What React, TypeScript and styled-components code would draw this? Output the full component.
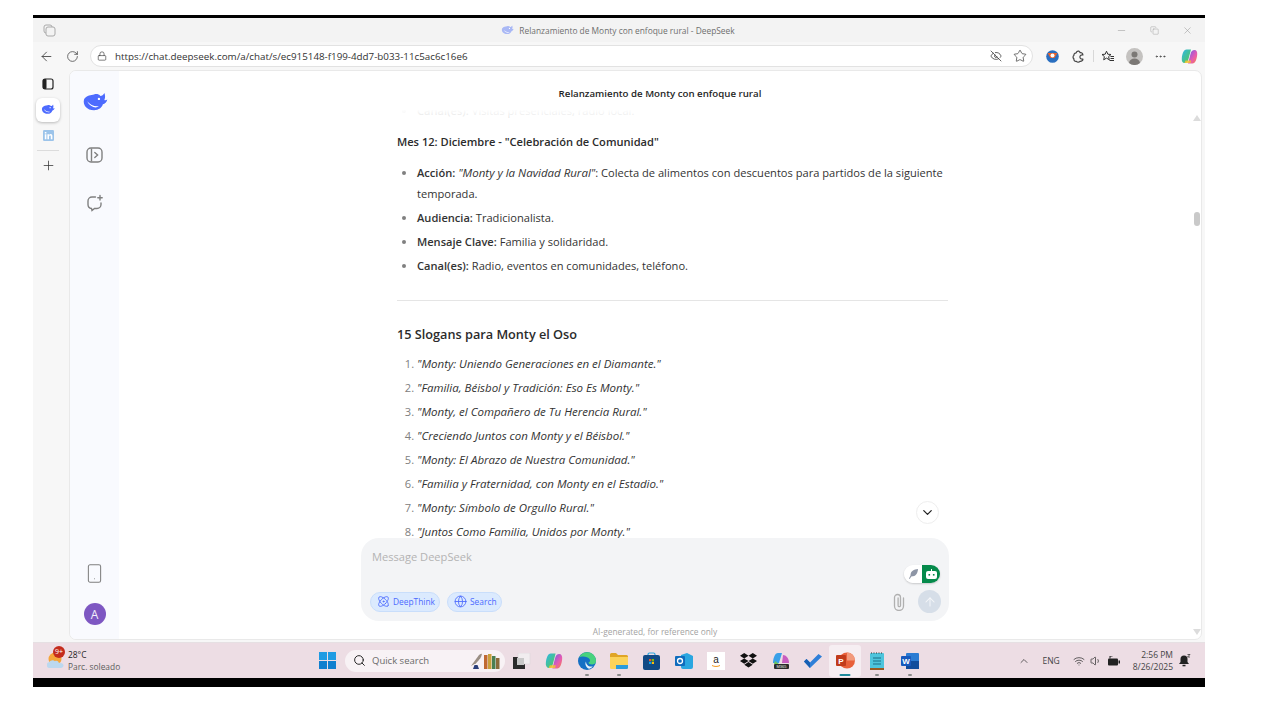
import styled, { createGlobalStyle } from 'styled-components';
import {
  ArrowLeft,
  ArrowUp,
  Atom,
  ChevronDown,
  ChevronUp,
  Copy,
  EyeOff,
  Globe,
  Lock,
  Minus,
  MoreHorizontal,
  Plus,
  RotateCw,
  Search,
  Smartphone,
  Star,
  Volume1,
  Wifi,
  X,
} from 'lucide-react';

const GlobalStyle = createGlobalStyle`
  html, body {
    margin: 0;
    padding: 0;
    background: #ffffff;
    font-family: "Open Sans", "Noto Sans", sans-serif;
  }
`;

const Page = styled.div`
  width: 1280px;
  height: 720px;
  padding: 15px 0 0 33px;
  box-sizing: border-box;
  overflow: hidden;
`;

const Window = styled.div`
  width: 1172px;
  height: 672px;
  display: flex;
  flex-direction: column;
  background: #f7f7f7;
  border-top: 3px solid #000;
  border-bottom: 9px solid #000;
  box-sizing: border-box;
`;

const TabBar = styled.div`
  height: 24px;
  flex: none;
  display: grid;
  grid-template-columns: 1fr auto 1fr;
  align-items: center;
  background: #f3f3f3;
  padding: 0 12px 0 10px;
  color: #8a8a8a;
`;

const TabTitle = styled.div`
  display: flex;
  align-items: center;
  gap: 5px;
  font-size: 8.4px;
  color: #6f6f6f;
`;

const WindowButtons = styled.div`
  display: flex;
  justify-content: flex-end;
  gap: 22px;
  color: #9a9a9a;
`;

const WindowButton = styled.div`
  width: 11px;
  display: flex;
  align-items: center;
  justify-content: center;
`;

const Toolbar = styled.div`
  height: 28px;
  flex: none;
  display: flex;
  align-items: center;
  padding-right: 3px;
  color: #444;
`;

const NavButton = styled.div`
  width: 26px;
  display: flex;
  justify-content: center;
`;

const AddressBar = styled.div`
  width: 943px;
  height: 22px;
  margin-left: 5px;
  display: flex;
  align-items: center;
  gap: 8px;
  padding: 0 5px 0 6px;
  box-sizing: border-box;
  background: #ffffff;
  border: 1px solid #e2e2e2;
  border-radius: 12px;
  font-size: 9.8px;
  color: #333;
`;

const Url = styled.span`
  flex: 1;
`;

const AddressActions = styled.div`
  display: flex;
  align-items: center;
  gap: 11px;
`;

const Extensions = styled.div`
  flex: 1;
  display: flex;
  align-items: center;
  justify-content: flex-end;
`;

const ToolSlot = styled.div<{ $spaced?: boolean }>`
  width: 26px;
  margin-left: ${({ $spaced }) => ($spaced ? '3px' : '0')};
  display: flex;
  align-items: center;
  justify-content: center;
`;

const ToolbarDivider = styled.div`
  width: 1px;
  height: 12px;
  background: #d8d8d8;
  margin: 0 1.5px;
`;

const Profile = styled.div`
  width: 17px;
  height: 17px;
  border-radius: 50%;
  background: #c4c2c0;
  display: flex;
  align-items: center;
  justify-content: center;
`;

const Body = styled.div`
  flex: 1;
  min-height: 0;
  display: flex;
  padding-right: 3px;
`;

const Rail = styled.div`
  width: 36px;
  flex: none;
  display: flex;
  flex-direction: column;
  align-items: center;
  padding-top: 2px;
  color: #333;
`;

const RailButton = styled.div<{ $active?: boolean }>`
  width: 24px;
  height: 24px;
  margin-left: -6px;
  margin-bottom: 1.5px;
  flex: none;
  display: flex;
  align-items: center;
  justify-content: center;
  border-radius: 6px;
  background: ${({ $active }) => ($active ? '#ffffff' : 'transparent')};
  box-shadow: ${({ $active }) => ($active ? '0 1px 3px rgba(0,0,0,.25)' : 'none')};
`;

const RailDivider = styled.div`
  width: 22px;
  height: 1px;
  flex: none;
  margin: 1.5px 0 2px -6px;
  background: #dcdcdc;
`;

const Panel = styled.div`
  flex: 1;
  min-width: 0;
  display: flex;
  background: #ffffff;
  border: 1px solid #e9e9e9;
  border-radius: 7px;
  overflow: hidden;
`;

const SideBar = styled.div`
  width: 49px;
  flex: none;
  display: flex;
  flex-direction: column;
  align-items: center;
  padding: 21px 0 14px;
  box-sizing: border-box;
  background: #f9fafe;
  color: #7f7f7f;
`;

const LogoSlot = styled.div`
  display: flex;
  margin-bottom: 6px;
`;

const SideIcon = styled.div`
  margin-top: 28px;
  height: 20px;
  display: flex;
  align-items: center;
`;

const SideSpacer = styled.div`
  flex: 1;
`;

const Avatar = styled.div`
  width: 22px;
  height: 22px;
  margin-top: 19px;
  border-radius: 50%;
  background: #7e57c2;
  color: #f4f0fb;
  font-size: 12px;
  display: flex;
  align-items: center;
  justify-content: center;
`;

const Main = styled.div`
  position: relative;
  flex: 1;
  min-width: 0;
  display: flex;
  flex-direction: column;
  align-items: center;
  padding-right: 10px;
`;

const ChatTitle = styled.div`
  height: 33px;
  flex: none;
  margin-left: 10px;
  display: flex;
  align-items: center;
  padding-top: 11px;
  box-sizing: border-box;
  font-size: 9.7px;
  font-weight: 600;
  color: #1f1f1f;
`;

const Conversation = styled.div`
  position: relative;
  flex: 1;
  min-height: 0;
  width: 551px;
  margin-left: 35px;
  overflow: hidden;
  color: #333;
  font-size: 11.1px;
  strong {
    font-weight: 600;
  }
  em {
    font-size: 11.5px;
  }
`;

const TopFade = styled.div`
  position: absolute;
  inset: 0 0 auto 0;
  height: 22px;
  background: linear-gradient(#fff 25%, rgba(255, 255, 255, 0.72));
`;

const FadedList = styled.ul`
  margin: -4px 0 0;
  padding: 0 0 0 20px;
  line-height: 21px;
`;

const SectionHeading = styled.div`
  margin: 11px 0 10px;
  font-size: 11.1px;
  font-weight: 600;
  line-height: 20px;
  color: #2b2b2b;
`;

const SlogansHeading = styled.div`
  margin-bottom: 9px;
  font-size: 12.7px;
  font-weight: 600;
  line-height: 20px;
  color: #2b2b2b;
`;

const BulletList = styled.ul`
  margin: 0;
  padding: 0 0 0 20px;
  line-height: 21px;
`;

const NumberList = styled.ol`
  margin: 0;
  padding: 0 0 0 20px;
  line-height: 21px;
`;

const Item = styled.li`
  margin-bottom: 3px;
  &::marker {
    color: #808080;
  }
`;

const Rule = styled.hr`
  margin: 24px 0 23px;
  border: 0;
  border-top: 1px solid #e5e5e5;
`;

const Composer = styled.div`
  position: relative;
  width: 588px;
  height: 83px;
  flex: none;
  box-sizing: border-box;
  padding: 11px 8px 8px 9px;
  display: flex;
  flex-direction: column;
  justify-content: space-between;
  border-radius: 18px;
  background: #f3f4f6;
`;

const Placeholder = styled.div`
  padding-left: 2px;
  font-size: 11.1px;
  color: #b3b3b3;
`;

const ComposerRow = styled.div`
  display: flex;
  align-items: center;
  gap: 7px;
`;

const Pill = styled.div`
  height: 20px;
  display: flex;
  align-items: center;
  gap: 3px;
  padding: 0 4px 0 6px;
  border: 1px solid #c9defb;
  border-radius: 10px;
  box-sizing: border-box;
  background: #dbeafe;
  font-size: 8.4px;
  color: #4d6bfe;
`;

const SendArea = styled.div`
  margin-left: auto;
  display: flex;
  align-items: center;
  gap: 13px;
`;

const SendButton = styled.div`
  width: 23px;
  height: 23px;
  border-radius: 50%;
  background: #d6dee8;
  color: #f4f6f9;
  display: flex;
  align-items: center;
  justify-content: center;
`;

const ModeSwitch = styled.div`
  position: absolute;
  top: 27px;
  right: 9px;
  display: flex;
  width: 36px;
  height: 18px;
  border-radius: 9px;
  overflow: hidden;
  box-shadow: 0 1px 2px rgba(0, 0, 0, 0.18);
`;

const ModeSide = styled.div<{ $green?: boolean }>`
  flex: 1;
  display: flex;
  align-items: center;
  justify-content: center;
  background: ${({ $green }) => ($green ? '#058a4b' : '#ffffff')};
`;

const Disclaimer = styled.div`
  height: 18px;
  flex: none;
  display: flex;
  align-items: center;
  padding-top: 2px;
  box-sizing: border-box;
  font-size: 8.4px;
  color: #a3a3a3;
`;

const JumpButton = styled.div`
  position: absolute;
  right: 262px;
  top: 430px;
  width: 23px;
  height: 23px;
  border-radius: 50%;
  background: #fff;
  border: 1px solid #eee;
  box-sizing: border-box;
  color: #222;
  display: flex;
  align-items: center;
  justify-content: center;
`;

const ScrollTrack = styled.div`
  position: absolute;
  top: 44px;
  right: 0;
  bottom: 4px;
  width: 9px;
`;

const ScrollArrow = styled.div<{ $down?: boolean }>`
  position: absolute;
  left: 1px;
  ${({ $down }) => ($down ? 'bottom: 0;' : 'top: 0;')}
  border-left: 4px solid transparent;
  border-right: 4px solid transparent;
  ${({ $down }) =>
    $down ? 'border-top: 6px solid #dcdcdc;' : 'border-bottom: 6px solid #dcdcdc;'}
`;

const ScrollThumb = styled.div`
  position: absolute;
  top: 97px;
  left: 2px;
  width: 6px;
  height: 14px;
  border-radius: 3px;
  background: #c9c9c9;
`;

const Taskbar = styled.div`
  height: 36px;
  flex: none;
  display: grid;
  grid-template-columns: 286px auto 1fr;
  align-items: center;
  margin-top: 2px;
  background: #eddde4;
  border-top: 1px solid #e6e0e3;
  box-sizing: border-box;
`;

const Weather = styled.div`
  display: flex;
  align-items: center;
  gap: 3px;
  padding-left: 14px;
`;

const WeatherIcon = styled.div`
  position: relative;
  width: 18px;
  height: 20px;
`;

const Badge = styled.div`
  position: absolute;
  top: -5px;
  left: 6px;
  width: 12px;
  height: 12px;
  border-radius: 50%;
  background: #c42b1c;
  color: #fff;
  font-size: 7px;
  display: flex;
  align-items: center;
  justify-content: center;
`;

const WeatherText = styled.div`
  font-size: 8.4px;
  line-height: 12px;
  color: #5d5d5d;
  strong {
    display: block;
    font-weight: 400;
    color: #222;
  }
`;

const Dock = styled.div`
  display: flex;
  align-items: center;
`;

const SearchBox = styled.div`
  width: 160px;
  height: 22px;
  margin: 0 1px 0 9px;
  display: flex;
  align-items: center;
  gap: 6px;
  padding: 0 5px 0 8px;
  box-sizing: border-box;
  border-radius: 11px;
  background: #f8f2f5;
  font-size: 9.5px;
  color: #6a6a6a;
`;

const SearchArt = styled.div`
  margin-left: auto;
  display: flex;
`;

const DockItem = styled.div<{ $active?: boolean; $dot?: boolean }>`
  position: relative;
  width: 32.3px;
  height: 32px;
  display: flex;
  align-items: center;
  justify-content: center;
  border-radius: 3px;
  background: ${({ $active }) => ($active ? 'rgba(255,255,255,.5)' : 'transparent')};
  &::after {
    content: '';
    display: ${({ $dot, $active }) => ($dot || $active ? 'block' : 'none')};
    position: absolute;
    bottom: 1px;
    left: 50%;
    transform: translateX(-50%);
    width: ${({ $active }) => ($active ? '11px' : '4px')};
    height: 2px;
    border-radius: 1px;
    background: ${({ $active }) => ($active ? '#1f8a9c' : '#8b8b8b')};
  }
`;

const Tray = styled.div`
  display: flex;
  align-items: center;
  justify-content: flex-end;
  padding-right: 14px;
  color: #333;
  font-size: 8.5px;
`;

const TrayLabel = styled.span`
  margin: 0 13px 0 12px;
  color: #444;
`;

const TrayIcons = styled.div`
  display: flex;
  align-items: center;
  gap: 5px;
`;

const Clock = styled.div`
  margin: 0 6px 0 13px;
  text-align: right;
  line-height: 12px;
  color: #444;
`;

const Whale = ({ size, color = '#4d6bfe' }: { size: number; color?: string }) => (
  <svg width={size} height={size * 0.72} viewBox="0 0 26 19">
    <path
      fill={color}
      d="M2 7C0 13 5 18.500 12 18.500c5 0 8-2.800 9-6 2-.5 4-2.500 4.500-5-1 .7-2 1-3 .5 1-2 1-4.500 0-7-1 2-2.500 3-4 3-1.500-2-4.500-2.500-6.500-1.500C9 3.500 5 3 2 7z"
    />
    <path fill="#fff" d="M5 9.500c3 3.500 7 5.500 12 5-3 2.500-9 1-12-5z" />
    <circle cx="17" cy="7" r="1.200" fill="#fff" />
  </svg>
);

const PanelIcon = () => (
  <svg width="12" height="12" viewBox="0 0 12 12">
    <rect x="1" y="1" width="10" height="10" rx="2" fill="none" stroke="#222" strokeWidth="1.2" />
    <rect x="1" y="1" width="3.5" height="10" rx="1" fill="#222" />
  </svg>
);

const LinkedInIcon = () => (
  <svg width="11" height="11" viewBox="0 0 11 11">
    <rect width="11" height="11" rx="1.2" fill="#9cc4ea" />
    <path fill="#fff" d="M1.800 4.200h1.600v5H1.800zM1.800 2h1.600v1.400H1.800zM4.400 4.200H6v.7c.4-.6 1-.8 1.600-.8 1.200 0 1.800.8 1.800 2.100v3H7.800V6.600c0-.7-.2-1.100-.8-1.100s-1 .4-1 1.200v2.500H4.400z" />
  </svg>
);

const NewChatIcon = () => (
  <svg width="18" height="18" viewBox="0 0 18 18" fill="none" stroke="#808080" strokeWidth="1.4" strokeLinecap="round">
    <path d="M9.500 3H6a4 4 0 0 0-4 4v3.500a4 4 0 0 0 3.500 4l.5 2 2.500-2H11a4 4 0 0 0 4-4V9" />
    <path d="M14 1.500v4.500M11.800 3.700h4.400" />
  </svg>
);

const SidePanelIcon = () => (
  <svg width="17" height="16" viewBox="0 0 17 16" fill="none" stroke="#808080" strokeWidth="1.4">
    <rect x="1" y="1" width="15" height="14" rx="4" />
    <path d="M5.500 1.500v13" />
    <path d="M8.800 5.500l2.800 2.500-2.800 2.500" strokeLinecap="round" />
  </svg>
);

const TabsIcon = () => (
  <svg width="13" height="13" viewBox="0 0 13 13" fill="none" stroke="#aaa" strokeWidth="1">
    <rect x="1" y="1" width="8" height="8" rx="2" />
    <rect x="3" y="3" width="9" height="9" rx="2" fill="#f3f3f3" />
  </svg>
);

const RingExtension = () => (
  <svg width="13" height="13" viewBox="0 0 13 13">
    <circle cx="6.500" cy="6.500" r="6.300" fill="#2a6fc0" />
    <path fill="#e8622c" d="M1.500 3h10L8.500 8h-4z" />
    <circle cx="6.500" cy="5.500" r="2" fill="#fff" />
  </svg>
);

const PuzzleIcon = () => (
  <svg width="13" height="13" viewBox="0 0 13 13" fill="none" stroke="#444" strokeWidth="1.200" strokeLinejoin="round">
    <path d="M7 1.200C5.500.8 4.500 1.700 4.200 2.800 2.800 2.800 1.700 4 2 5.300.8 6 .7 8 1.900 8.800c-.3 1.600 1 2.900 2.500 2.500.8 1 2.700 1.100 3.500 0 1.600.3 3.100-.8 3-2.300-1.500.5-3-.5-3-2s1.500-2.500 3-2c0-1.500-1.200-2.600-2.800-2.400C7.700 2 7.500 1.500 7 1.200z" />
  </svg>
);

const FavoritesIcon = () => (
  <svg width="14" height="13" viewBox="0 0 14 13" fill="none" stroke="#333" strokeWidth="1">
    <path d="M5.500 1.200l1.300 3 3.200.3-2.400 2.100.7 3.200-2.800-1.700-2.800 1.700.7-3.200L1 4.500l3.200-.3z" />
    <path d="M9.500 6.500H13M9.500 8.500H13M8.500 10.500H13" />
  </svg>
);

const PersonIcon = () => (
  <svg width="17" height="17" viewBox="0 0 17 17">
    <circle cx="8.500" cy="6.500" r="3" fill="#7b7875" />
    <path fill="#7b7875" d="M3 15c.4-3 2.600-4.500 5.500-4.500S13.600 12 14 15a8.500 8.500 0 0 1-11 0z" />
  </svg>
);

const CopilotIcon = ({ size = 17 }: { size?: number }) => (
  <svg width={size} height={size} viewBox="0 0 17 17">
    <defs>
      <linearGradient id="cpa" x1="0" y1="0" x2="1" y2="1">
        <stop offset="0" stopColor="#2fb7e8" />
        <stop offset="1" stopColor="#57c84d" />
      </linearGradient>
      <linearGradient id="cpb" x1="0" y1="0" x2="1" y2="1">
        <stop offset="0" stopColor="#6d5bf0" />
        <stop offset=".6" stopColor="#e85bb0" />
        <stop offset="1" stopColor="#f6873c" />
      </linearGradient>
    </defs>
    <path fill="url(#cpa)" d="M5.500 1.500H10L7.500 11c-.5 2.500-2 4-4 4C1.500 15 .5 13 .8 10.500 1.200 6 2.500 1.500 5.500 1.500z" />
    <path fill="url(#cpb)" d="M11.500 15.500H7l2.500-9.500c.5-2.500 2-4 4-4 2 0 3 2 2.700 4.500-.4 4.500-1.700 9-4.700 9z" />
    <path fill="#f4c430" d="M3.500 15h6l.8-2.500H4.500z" opacity=".85" />
  </svg>
);

const WindowsLogo = () => (
  <svg width="17" height="17" viewBox="0 0 17 17">
    <path fill="#1f9be3" d="M0 0h8v8H0zM9 0h8v8H9z" />
    <path fill="#0f7fcf" d="M0 9h8v8H0zM9 9h8v8H9z" />
  </svg>
);

const SunCloud = () => (
  <svg width="17" height="18" viewBox="0 0 17 18">
    <circle cx="8" cy="8" r="6.500" fill="#f6a53a" />
    <path fill="#bcd8ef" d="M3 17a3 3 0 0 1-.5-6c.8-2 4-2.600 5.500-.8 1.500-1 3.600 0 3.700 1.500 2.800-.3 5 1 4.800 2.900-.1 1.500-1.200 2.400-2.500 2.400z" />
  </svg>
);

const BooksArt = () => (
  <svg width="30" height="16" viewBox="0 0 30 16">
    <path fill="#9a8f84" d="M1 13L9 2c1-.8 2-1.200 3-1.200-.5 3-2 5.500-6 9.500z" />
    <path fill="#2b3f7a" d="M3 16l1.500-4h3l1.500 4z" />
    <path fill="#c06a33" d="M14 2h3.500v14H14z" />
    <path fill="#c9a13c" d="M18 1h3.500v15H18z" />
    <path fill="#4b7f52" d="M22 3h3.500v13H22z" />
    <path fill="#8a6b3a" d="M26 5h3.500v11H26z" />
  </svg>
);

const TaskViewIcon = () => (
  <svg width="18" height="16" viewBox="0 0 18 16">
    <rect x="0" y="4" width="12" height="12" fill="#2b2b2b" />
    <rect x="5" y="0" width="12" height="11" fill="#f1edef" stroke="#dcd8da" strokeWidth=".6" />
    <rect x="4" y="5" width="7" height="7" fill="#c8c8c8" />
  </svg>
);

const EdgeIcon = () => (
  <svg width="18" height="18" viewBox="0 0 18 18">
    <circle cx="9" cy="9" r="9" fill="#1570c4" />
    <path fill="#49d27d" d="M1 5.500C3 1 7.500-.5 11.500.5c3.500 1 6.500 4 6.500 8.500 0 2-1.500 3.500-4 3.500-2 0-3.500-1-3.500-2 1.500-.5 2-2 1-3.500C10 4.500 4 3.500 1 5.500z" />
    <path fill="#fff" opacity=".9" d="M8 9.500c0 3 2.500 5.500 6 5 .5-.1 1 .1.500.5-1 .8-2 1.500-3.500 1.800C8 15.500 6.500 12 8 9.500z" />
  </svg>
);

const FolderIcon = () => (
  <svg width="18" height="16" viewBox="0 0 18 16">
    <path fill="#e0a526" d="M0 1.500A1.500 1.500 0 0 1 1.500 0H6l2 2h8.500A1.500 1.500 0 0 1 18 3.500V6H0z" />
    <path fill="#fbd35a" d="M0 4h18v10.500a1.500 1.500 0 0 1-1.500 1.500h-15A1.500 1.500 0 0 1 0 14.500z" />
    <path fill="#2a9bdc" d="M6 12h12v2.500a1.500 1.500 0 0 1-1.500 1.500H6z" />
  </svg>
);

const StoreIcon = () => (
  <svg width="17" height="18" viewBox="0 0 17 18">
    <path fill="none" stroke="#2aa6e0" strokeWidth="1.200" d="M5 4V2.500A1.500 1.500 0 0 1 6.500 1h4A1.500 1.500 0 0 1 12 2.500V4" />
    <rect y="3" width="17" height="15" rx="2" fill="#114a85" />
    <path fill="#f35325" d="M6 7h2.200v2.200H6z" />
    <path fill="#81bc06" d="M8.800 7H11v2.200H8.800z" />
    <path fill="#05a6f0" d="M6 9.800h2.200V12H6z" />
    <path fill="#ffba08" d="M8.800 9.800H11V12H8.800z" />
  </svg>
);

const OutlookIcon = () => (
  <svg width="18" height="16" viewBox="0 0 18 16">
    <path fill="#2aa6e0" d="M6 2l6-2 6 3v11a2 2 0 0 1-2 2H8a2 2 0 0 1-2-2z" />
    <rect y="3" width="10" height="10" rx="1" fill="#0f6cbd" />
    <circle cx="5" cy="8" r="2.500" fill="none" stroke="#fff" strokeWidth="1.300" />
  </svg>
);

const AmazonIcon = () => (
  <svg width="18" height="18" viewBox="0 0 18 18">
    <rect width="18" height="18" fill="#fff" />
    <text x="9" y="11" textAnchor="middle" fontSize="10" fontFamily="Liberation Sans" fill="#222">a</text>
    <path d="M5 13.500c2.500 1.300 5.500 1.300 8 0" stroke="#f39a1f" strokeWidth="1" fill="none" />
  </svg>
);

const DropboxIcon = () => (
  <svg width="17" height="15" viewBox="0 0 17 15">
    <path fill="#111" d="M4.200 0l4.300 2.700L4.200 5.400 0 2.700zM12.800 0l4.200 2.700-4.200 2.700-4.300-2.700zM4.200 5.400l4.300 2.700-4.300 2.700L0 8.100zM12.800 5.400L17 8.100l-4.200 2.700-4.300-2.700zM4.300 11.700l4.200-2.700 4.200 2.700-4.200 2.800z" />
  </svg>
);

const M365Icon = () => (
  <svg width="18" height="18" viewBox="0 0 18 18">
    <path fill="#3aa0e8" d="M6 1h4L7 11H1C1 6 3 1 6 1z" />
    <path fill="#c85cc0" d="M11 3c3 0 6 3 6 8h-7z" />
    <path fill="#6bc65a" d="M3 9l4 3H2z" />
    <rect x="2" y="12" width="15" height="5" rx="1" fill="#2b2b2b" />
    <text x="9.500" y="16" textAnchor="middle" fontSize="4" fontFamily="Liberation Sans" fill="#eee">M365</text>
  </svg>
);

const TodoIcon = () => (
  <svg width="18" height="14" viewBox="0 0 18 14">
    <path fill="#2f7fd8" d="M0 7.500L2.500 5 6 8.500 14.500 0 18 2.500 6 14z" />
    <path fill="#175fb3" d="M0 7.500L2.500 5 6 8.500 6 14z" />
  </svg>
);

const PowerPointIcon = () => (
  <svg width="19" height="17" viewBox="0 0 19 17">
    <circle cx="11" cy="8.500" r="8" fill="#e8603a" />
    <path fill="#f29a7c" d="M11 .5a8 8 0 0 1 8 8h-8z" />
    <rect y="3" width="10" height="11" rx="1" fill="#c13b1b" />
    <text x="5" y="11.500" textAnchor="middle" fontSize="8" fontWeight="700" fontFamily="Liberation Sans" fill="#fff">P</text>
  </svg>
);

const NotepadIcon = () => (
  <svg width="14" height="18" viewBox="0 0 14 18">
    <rect y="1" width="14" height="17" rx="1" fill="#4dc4dc" />
    <rect y="16" width="14" height="2" fill="#9a5a22" />
    <path stroke="#1b6f86" d="M3 6h8M3 9h8M3 12h8" />
    <path stroke="#333" strokeDasharray="1 1.500" d="M1 1h12" />
  </svg>
);

const WordIcon = () => (
  <svg width="18" height="16" viewBox="0 0 18 16">
    <rect x="5" width="13" height="16" rx="1" fill="#2b7cd3" />
    <rect x="5" y="8" width="13" height="8" fill="#124d9c" />
    <rect y="3" width="10" height="10" rx="1" fill="#185abd" />
    <text x="5" y="11" textAnchor="middle" fontSize="8" fontWeight="700" fontFamily="Liberation Sans" fill="#fff">W</text>
  </svg>
);

const BatteryIcon = () => (
  <svg width="13" height="10" viewBox="0 0 13 10">
    <rect x="1" y="2.500" width="10" height="7" rx="1" fill="#222" />
    <rect x="11.500" y="4.500" width="1.500" height="3" fill="#222" />
    <path d="M3 2.500V0h2.500" stroke="#222" fill="none" />
  </svg>
);

const BellIcon = () => (
  <svg width="12" height="13" viewBox="0 0 12 13">
    <path fill="#222" d="M5 1.500a3.500 3.500 0 0 1 3.500 3.500v3L10 10H0l1.500-2V5A3.500 3.500 0 0 1 5 1.500z" />
    <rect x="3.500" y="10.800" width="3" height="1.500" fill="#222" />
    <path stroke="#222" strokeWidth=".7" fill="none" d="M8.500 .5h2.500l-2.500 2.500h2.500" />
  </svg>
);

const RobotIcon = () => (
  <svg width="11" height="10" viewBox="0 0 11 10">
    <path stroke="#fff" d="M5.500 0v2" />
    <rect y="2" width="11" height="8" rx="2" fill="#fff" />
    <rect x="2.500" y="5" width="1.600" height="1.600" fill="#058a4b" />
    <rect x="6.900" y="5" width="1.600" height="1.600" fill="#058a4b" />
  </svg>
);

const FeatherIcon = () => (
  <svg width="9" height="10" viewBox="0 0 9 10">
    <path fill="#8d95a5" d="M9 0C5 .2 1.500 2 1.500 6.500L0 9.500l.7.500L2.300 7.500C7 7.500 8.800 4 9 0z" />
  </svg>
);

const ClipIcon = () => (
  <svg width="12" height="18" viewBox="0 0 12 18" fill="none" stroke="#b0b0b0" strokeWidth="1.300" strokeLinecap="round">
    <path d="M10.500 5v8a4.500 4.500 0 0 1-9 0V4.500a3 3 0 0 1 6 0V12.500a1.200 1.200 0 0 1-2.400 0V5" />
  </svg>
);

const dockIcons = [
  { id: 'task', icon: <TaskViewIcon /> },
  { id: 'copilot', icon: <CopilotIcon size={18} /> },
  { id: 'edge', icon: <EdgeIcon />, dot: true },
  { id: 'folder', icon: <FolderIcon />, dot: true },
  { id: 'store', icon: <StoreIcon /> },
  { id: 'outlook', icon: <OutlookIcon /> },
  { id: 'amazon', icon: <AmazonIcon /> },
  { id: 'dropbox', icon: <DropboxIcon /> },
  { id: 'm365', icon: <M365Icon /> },
  { id: 'todo', icon: <TodoIcon /> },
  { id: 'ppt', icon: <PowerPointIcon />, active: true },
  { id: 'notepad', icon: <NotepadIcon />, dot: true },
  { id: 'word', icon: <WordIcon />, dot: true },
];

const slogans = [
  'Monty: Uniendo Generaciones en el Diamante.',
  'Familia, Béisbol y Tradición: Eso Es Monty.',
  'Monty, el Compañero de Tu Herencia Rural.',
  'Creciendo Juntos con Monty y el Béisbol.',
  'Monty: El Abrazo de Nuestra Comunidad.',
  'Familia y Fraternidad, con Monty en el Estadio.',
  'Monty: Símbolo de Orgullo Rural.',
  'Juntos Como Familia, Unidos por Monty.',
];

const App = () => (
  <Page>
    <GlobalStyle />
    <Window>
      <TabBar>
        <TabsIcon />
        <TabTitle>
          <Whale size={13} color="#a9b8f5" />
          Relanzamiento de Monty con enfoque rural - DeepSeek
        </TabTitle>
        <WindowButtons>
          <WindowButton>
            <Minus size={11} strokeWidth={1.2} />
          </WindowButton>
          <WindowButton>
            <Copy size={9} strokeWidth={1.2} />
          </WindowButton>
          <WindowButton>
            <X size={11} strokeWidth={1.2} />
          </WindowButton>
        </WindowButtons>
      </TabBar>
      <Toolbar>
        <NavButton>
          <ArrowLeft size={15} strokeWidth={1.4} />
        </NavButton>
        <NavButton>
          <RotateCw size={13} strokeWidth={1.4} />
        </NavButton>
        <AddressBar>
          <Lock size={10} strokeWidth={1.5} />
          <Url>https://chat.deepseek.com/a/chat/s/ec915148-f199-4dd7-b033-11c5ac6c16e6</Url>
          <AddressActions>
            <EyeOff size={12} strokeWidth={1.5} />
            <Star size={14} strokeWidth={1.2} />
          </AddressActions>
        </AddressBar>
        <Extensions>
          <ToolSlot>
            <RingExtension />
          </ToolSlot>
          <ToolSlot>
            <PuzzleIcon />
          </ToolSlot>
          <ToolbarDivider />
          <ToolSlot>
            <FavoritesIcon />
          </ToolSlot>
          <ToolSlot>
            <Profile>
              <PersonIcon />
            </Profile>
          </ToolSlot>
          <ToolSlot>
            <MoreHorizontal size={13} strokeWidth={1.6} />
          </ToolSlot>
          <ToolSlot $spaced>
            <CopilotIcon />
          </ToolSlot>
        </Extensions>
      </Toolbar>
      <Body>
        <Rail>
          <RailButton>
            <PanelIcon />
          </RailButton>
          <RailButton $active>
            <Whale size={14} />
          </RailButton>
          <RailButton>
            <LinkedInIcon />
          </RailButton>
          <RailDivider />
          <RailButton>
            <Plus size={15} strokeWidth={1.2} />
          </RailButton>
        </Rail>
        <Panel>
          <SideBar>
            <LogoSlot>
              <Whale size={26} />
            </LogoSlot>
            <SideIcon>
              <SidePanelIcon />
            </SideIcon>
            <SideIcon>
              <NewChatIcon />
            </SideIcon>
            <SideSpacer />
            <Smartphone size={21} strokeWidth={1.2} />
            <Avatar>A</Avatar>
          </SideBar>
          <Main>
            <ChatTitle>Relanzamiento de Monty con enfoque rural</ChatTitle>
            <Conversation>
              <FadedList>
                <Item>
                  <strong>Canal(es):</strong> Visitas presenciales, radio local.
                </Item>
              </FadedList>
              <SectionHeading>Mes 12: Diciembre - "Celebración de Comunidad"</SectionHeading>
              <BulletList>
                <Item>
                  <strong>Acción:</strong> <em>"Monty y la Navidad Rural"</em>: Colecta de alimentos con descuentos para partidos de la siguiente temporada.
                </Item>
                <Item>
                  <strong>Audiencia:</strong> Tradicionalista.
                </Item>
                <Item>
                  <strong>Mensaje Clave:</strong> Familia y solidaridad.
                </Item>
                <Item>
                  <strong>Canal(es):</strong> Radio, eventos en comunidades, teléfono.
                </Item>
              </BulletList>
              <Rule />
              <SlogansHeading>15 Slogans para Monty el Oso</SlogansHeading>
              <NumberList>
                {slogans.map((slogan) => (
                  <Item key={slogan}>
                    <em>"{slogan}"</em>
                  </Item>
                ))}
              </NumberList>
              <TopFade />
            </Conversation>
            <Composer>
              <Placeholder>Message DeepSeek</Placeholder>
              <ModeSwitch>
                <ModeSide>
                  <FeatherIcon />
                </ModeSide>
                <ModeSide $green>
                  <RobotIcon />
                </ModeSide>
              </ModeSwitch>
              <ComposerRow>
                <Pill>
                  <Atom size={13} strokeWidth={1.6} />
                  DeepThink
                </Pill>
                <Pill>
                  <Globe size={13} strokeWidth={1.6} />
                  Search
                </Pill>
                <SendArea>
                  <ClipIcon />
                  <SendButton>
                    <ArrowUp size={14} strokeWidth={1.8} />
                  </SendButton>
                </SendArea>
              </ComposerRow>
            </Composer>
            <Disclaimer>AI-generated, for reference only</Disclaimer>
            <JumpButton>
              <ChevronDown size={15} strokeWidth={2} />
            </JumpButton>
            <ScrollTrack>
              <ScrollArrow />
              <ScrollThumb />
              <ScrollArrow $down />
            </ScrollTrack>
          </Main>
        </Panel>
      </Body>
      <Taskbar>
        <Weather>
          <WeatherIcon>
            <SunCloud />
            <Badge>9+</Badge>
          </WeatherIcon>
          <WeatherText>
            <strong>28°C</strong>
            Parc. soleado
          </WeatherText>
        </Weather>
        <Dock>
          <WindowsLogo />
          <SearchBox>
            <Search size={13} strokeWidth={1.8} color="#222" />
            Quick search
            <SearchArt>
              <BooksArt />
            </SearchArt>
          </SearchBox>
          {dockIcons.map(({ id, icon, dot, active }) => (
            <DockItem key={id} $dot={dot} $active={active}>
              {icon}
            </DockItem>
          ))}
        </Dock>
        <Tray>
          <ChevronUp size={12} strokeWidth={1.5} />
          <TrayLabel>ENG</TrayLabel>
          <TrayIcons>
            <Wifi size={12} strokeWidth={1.5} />
            <Volume1 size={12} strokeWidth={1.5} />
            <BatteryIcon />
          </TrayIcons>
          <Clock>
            2:56 PM
            <br />
            8/26/2025
          </Clock>
          <BellIcon />
        </Tray>
      </Taskbar>
    </Window>
  </Page>
);

export default App;
